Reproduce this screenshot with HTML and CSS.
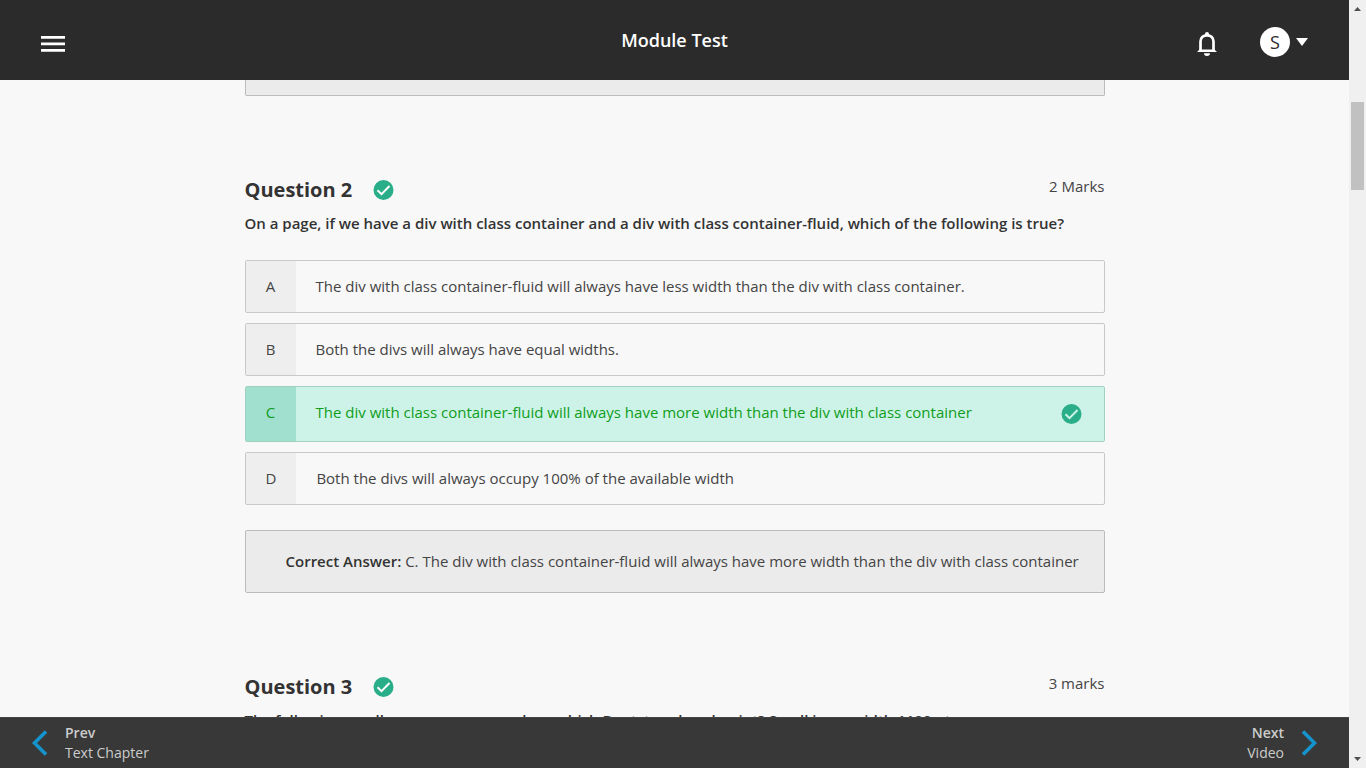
FILE: index.html
```html
<!DOCTYPE html>
<html lang="en">
<head>
<meta charset="utf-8">
<meta name="viewport" content="width=device-width, initial-scale=1">
<title>Module Test</title>
<link rel="stylesheet" href="styles.css">
</head>
<body>
<svg class="defs" aria-hidden="true">
  <symbol id="check" viewBox="0 0 20 20">
    <circle cx="10" cy="10" r="10" fill="#2aae89"/>
    <path d="M4 10.3 8 14.2 16 6" fill="none" stroke="currentColor" stroke-width="2"/>
  </symbol>
</svg>
<div class="page">
  <header class="topbar">
    <button class="icon-button" type="button" aria-label="Menu">
      <svg width="24" height="16" viewBox="0 0 24 16"><path d="M0 1.4h24M0 7.9h24M0 14.4h24" stroke="#fff" stroke-width="2.8"/></svg>
    </button>
    <h1 class="topbar-title">Module Test</h1>
    <div class="topbar-actions">
      <button class="icon-button" type="button" aria-label="Notifications">
        <svg width="20" height="24" viewBox="0 0 20 24"><path d="M3.5 19V9.5C3.5 5.8 6 3.3 10 3.3s6.500 2.500 6.500 6.200V19" fill="none" stroke="#fff" stroke-width="2.700"/><path d="M8 3V2a2 2 0 0 1 4 0v1zM0 20l2.500-2.500h15L20 20zM7 21.300h6a3 2.700 0 0 1-6 0z" fill="#fff"/></svg>
      </button>
      <button class="account" type="button" aria-label="Account">
        <span class="avatar">S</span>
        <svg width="12" height="8" viewBox="0 0 12 8"><path d="M0 0h12L6 8z" fill="#fff"/></svg>
      </button>
    </div>
  </header>

  <main class="content">
    <div class="quiz">
      <div class="answer-end"></div>

      <section class="question">
        <div class="question-head">
          <h2 class="question-title">Question 2</h2>
          <svg class="check" role="img" aria-label="Correct"><use href="#check"/></svg>
          <span class="marks">2 Marks</span>
        </div>
        <p class="question-text">On a page, if we have a div with class container and a div with class container-fluid, which of the following is true?</p>
        <ul class="options">
          <li class="option"><span class="letter">A</span><span class="option-text">The div with class container-fluid will always have less width than the div with class container.</span></li>
          <li class="option"><span class="letter">B</span><span class="option-text">Both the divs will always have equal widths.</span></li>
          <li class="option option-correct"><span class="letter">C</span><span class="option-text">The div with class container-fluid will always have more width than the div with class container</span><svg class="check" role="img" aria-label="Correct"><use href="#check"/></svg></li>
          <li class="option"><span class="letter">D</span><span class="option-text">Both the divs will always occupy 100% of the available width</span></li>
        </ul>
        <p class="answer"><b>Correct Answer:</b> C. The div with class container-fluid will always have more width than the div with class container</p>
      </section>

      <section class="question">
        <div class="question-head">
          <h2 class="question-title">Question 3</h2>
          <svg class="check" role="img" aria-label="Correct"><use href="#check"/></svg>
          <span class="marks">3 marks</span>
        </div>
        <p class="question-text">The following small screen menu area has, which Bootstrap breakpoint? Small in an width 1100 pt</p>
      </section>
    </div>
  </main>

  <footer class="bottombar">
    <a class="step" href="#prev">
      <svg width="16" height="26" viewBox="0 0 16 26"><path d="M14 1.500 2.500 13 14 24.500" fill="none" stroke="#1593cc" stroke-width="3.600"/></svg>
      <span class="step-label"><b>Prev</b><span>Text Chapter</span></span>
    </a>
    <a class="step step-next" href="#next">
      <span class="step-label"><b>Next</b><span>Video</span></span>
      <svg width="16" height="26" viewBox="0 0 16 26"><path d="M2 1.500 13.500 13 2 24.500" fill="none" stroke="#1593cc" stroke-width="3.600"/></svg>
    </a>
  </footer>
</div>
<div class="scrollbar" aria-hidden="true">
  <svg width="7" height="4" viewBox="0 0 7 4"><path d="M0 4h7L3.500 0z" fill="#505050"/></svg>
  <div class="track"><div class="thumb"></div></div>
  <svg width="7" height="4" viewBox="0 0 7 4"><path d="M0 0h7L3.500 4z" fill="#505050"/></svg>
</div>
</body>
</html>
```
FILE: styles.css
```css
* {
  box-sizing: border-box;
}

body {
  display: flex;
  height: 100vh;
  margin: 0;
  background: #f8f8f8;
  color: #333;
  font: 400 15px/20px "Open Sans", "Noto Sans", sans-serif;
}

h1, h2, p, ul {
  margin: 0;
  padding: 0;
}

b {
  font-weight: 600;
}

button {
  padding: 0;
  border: 0;
  background: none;
  color: inherit;
  font: inherit;
  cursor: pointer;
}

svg {
  display: block;
  flex: none;
}

.defs {
  position: absolute;
  width: 0;
  height: 0;
}

.page {
  display: grid;
  flex: 1;
  grid-template-rows: auto 1fr auto;
  min-width: 0;
  height: 100%;
}

.topbar {
  display: grid;
  grid-template-columns: 1fr auto 1fr;
  align-items: center;
  height: 80px;
  padding: 0 41px;
  background: #2b2b2b;
  color: #fff;
}

.topbar .icon-button {
  justify-self: start;
  padding-top: 8px;
}

.topbar-title {
  font-size: 18px;
  font-weight: 600;
  line-height: 24px;
}

.topbar-actions {
  display: flex;
  align-items: center;
  justify-content: flex-end;
  gap: 43px;
}

.account {
  display: flex;
  align-items: center;
  gap: 6px;
  padding-top: 4px;
}

.avatar {
  width: 30px;
  border-radius: 50%;
  background: #fff;
  color: #2b2b2b;
  font-size: 18px;
  line-height: 30px;
}

.content {
  min-height: 0;
  overflow: hidden;
}

.quiz {
  max-width: 860px;
  margin: 0 auto;
}

.answer-end {
  height: 16px;
  border: 1px solid #bbb;
  border-top: 0;
  border-radius: 0 0 2px 2px;
  background: #ebebeb;
}

.question {
  padding-top: 80px;
}

.question-head {
  display: flex;
  align-items: center;
  gap: 21px;
  height: 28px;
}

.question-title {
  font-size: 20px;
  font-weight: 700;
  line-height: 28px;
}

.check {
  width: 21px;
  height: 20px;
  color: #fff;
}

.marks {
  align-self: flex-start;
  margin-left: auto;
  color: #444;
}

.question-text {
  padding-top: 9px;
  font-weight: 600;
}

.options {
  display: grid;
  gap: 10px;
  padding: 27px 0 25px;
  color: #444;
  list-style: none;
}

.option {
  display: flex;
  align-items: stretch;
  min-height: 53px;
  border: 1px solid #c8c8c8;
  border-radius: 2px;
}

.letter {
  min-width: 50px;
  padding: 15px 20px 0;
  background: #eee;
  text-align: center;
}

.option-text {
  flex: 1;
  padding: 15px 20px;
}

.option-correct {
  min-height: 56px;
  border-color: #9fd0c0;
  background: #cdf3e8;
  color: #0f9d1b;
}

.option-correct .letter {
  background: #a1dfcf;
}

.option-correct .check {
  align-self: center;
  margin-right: 22px;
  color: #cdf3e8;
}

.answer {
  padding: 20px 20px 21px 40px;
  border: 1px solid #bbb;
  border-radius: 2px;
  background: #ebebeb;
  color: #444;
}

.answer b {
  color: #333;
}

.bottombar {
  display: flex;
  align-items: center;
  justify-content: space-between;
  height: 51px;
  padding: 0 32px;
  border-top: 1px solid #444;
  background: #383838;
}

.step {
  display: flex;
  align-items: center;
  gap: 17px;
  color: #ccc;
  font-size: 14px;
  text-decoration: none;
}

.step-label {
  display: grid;
}

.step-next {
  text-align: right;
}

.scrollbar {
  display: flex;
  flex-direction: column;
  align-items: center;
  width: 17px;
  padding: 7px 2px;
  background: #f0f0f0;
}

.track {
  flex: 1;
  width: 100%;
  padding-top: 91px;
}

.thumb {
  height: 88px;
  background: #c1c1c1;
}
```
